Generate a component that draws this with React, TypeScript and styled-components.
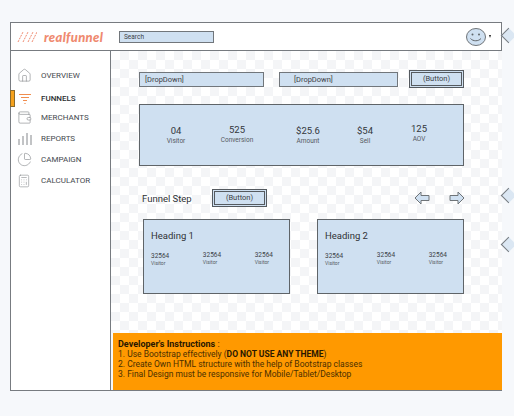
import React, { FC } from "react";
import styled, { createGlobalStyle } from "styled-components";
import { House, Wallet, ChartPie, Calculator } from "lucide-react";

const GlobalStyle = createGlobalStyle`
  html, body {
    margin: 0;
    padding: 0;
    background: #f6f8fb;
    font-family: Roboto, "Liberation Sans", sans-serif;
    color: #2f3236;
  }
`;

const FunnelIcon = () => (
  <svg width="16" height="14" viewBox="0 0 16 14" fill="none" stroke="#f08d4f" strokeWidth="1">
    <path d="M2 2.5h12M4 5.5h8M6 8.5h4M7.4 11.5h1.2" />
  </svg>
);

const BarsIcon = () => (
  <svg width="16" height="14" viewBox="0 0 16 14" fill="none" stroke="#85888c" strokeWidth="1">
    <path d="M2 7v6M6 4v9M10 1v12M14 3v10" />
  </svg>
);

const Smiley = () => (
  <svg width="22" height="20" viewBox="0 0 22 20">
    <ellipse cx="11" cy="10" rx="9.5" ry="8.5" fill="#cfe0f1" stroke="#6f7478" strokeWidth="1" />
    <circle cx="7.5" cy="7.5" r="1" fill="#5f6468" />
    <circle cx="14" cy="7.5" r="1" fill="#5f6468" />
    <path d="M5.5 11.5c2.5 3 8 3 10.5 0" fill="none" stroke="#5f6468" strokeWidth="1" />
  </svg>
);

const Slashes = () => (
  <svg width="20" height="12" viewBox="0 0 20 12" fill="none" stroke="#ef8a70" strokeWidth="1" strokeDasharray="2 1">
    <path d="M1 11L6 1M6 11L11 1M11 11L16 1M15 11L20 1" />
  </svg>
);

const BlockArrow: FC<{ flip?: boolean }> = ({ flip }) => (
  <svg width="16" height="14" viewBox="0 0 16 14">
    <path
      d={flip ? "M1 4.5h8V1l6 6-6 6V9.5H1z" : "M15 4.5H7V1L1 7l6 6V9.5h8z"}
      fill="#cfe0f1"
      stroke="#6f7478"
      strokeWidth="1"
    />
  </svg>
);

const navItems = [
  { label: "OVERVIEW", icon: <House size={15} strokeWidth={1} color="#85888c" />, gap: 0 },
  { label: "FUNNELS", icon: <FunnelIcon />, gap: 2, active: true },
  { label: "MERCHANTS", icon: <Wallet size={15} strokeWidth={1} color="#85888c" />, gap: -2 },
  { label: "REPORTS", icon: <BarsIcon />, gap: 0 },
  { label: "CAMPAIGN", icon: <ChartPie size={15} strokeWidth={1} color="#85888c" />, gap: 0 },
  { label: "CALCULATOR", icon: <Calculator size={14} strokeWidth={1} color="#85888c" />, gap: 0 },
];

const stats = [
  { value: "04", label: "Visitor", width: 72, lift: 0 },
  { value: "525", label: "Conversion", width: 50, lift: 1 },
  { value: "$25.6", label: "Amount", width: 92, lift: 0 },
  { value: "$54", label: "Sell", width: 22, lift: 0 },
  { value: "125", label: "AOV", width: 86, lift: 2 },
];

const funnelCards = [
  { title: "Heading 1", spacing: 148 },
  { title: "Heading 2", spacing: 146 },
];

export default function App() {
  return (
    <>
      <GlobalStyle />
      <Page>
        <Frame>
          <Header>
            <Logo>
              <Slashes />
              <LogoText>realfunnel</LogoText>
            </Logo>
            <Search>Search</Search>
            <UserMenu>
              <Smiley />
              <Caret />
            </UserMenu>
          </Header>
          <Body>
            <Sidebar>
              {navItems.map((item) => (
                <NavItem key={item.label} $gap={item.gap} $active={item.active}>
                  {item.active && <Marker />}
                  <NavIcon>{item.icon}</NavIcon>
                  {item.label}
                </NavItem>
              ))}
            </Sidebar>
            <Content>
              <Main>
                <FilterRow>
                  <DropDown $width={125}>[DropDown]</DropDown>
                  <DropDown $width={119} $indent={14}>[DropDown]</DropDown>
                  <ActionButton $spaced>(Button)</ActionButton>
                </FilterRow>
                <StatsPanel>
                  {stats.map((s) => (
                    <Stat key={s.label} $width={s.width} $lift={s.lift}>
                      <StatValue>{s.value}</StatValue>
                      <StatLabel>{s.label}</StatLabel>
                    </Stat>
                  ))}
                </StatsPanel>
                <StepRow>
                  <StepTitle>Funnel Step</StepTitle>
                  <ActionButton>(Button)</ActionButton>
                  <Arrows>
                    <BlockArrow />
                    <BlockArrow flip />
                  </Arrows>
                </StepRow>
                <Cards>
                  {funnelCards.map((card) => (
                    <Card key={card.title}>
                      <CardTitle>{card.title}</CardTitle>
                      <CardStats>
                        {[0, 1, 2].map((i) => (
                          <CardStat key={i} $low={i === 0}>
                            <b>32564</b>
                            <span>Visitor</span>
                          </CardStat>
                        ))}
                      </CardStats>
                    </Card>
                  ))}
                </Cards>
              </Main>
              <Notes>
                <NotesTitle>
                  Developer's Instructions <span>:</span>
                </NotesTitle>
                <div>
                  1. Use Bootstrap effectively (<strong>DO NOT USE ANY THEME</strong>)
                </div>
                <div>2. Create Own HTML structure with the help of Bootstrap classes</div>
                <div>3. Final Design must be responsive for Mobile/Tablet/Desktop</div>
              </Notes>
            </Content>
          </Body>
        </Frame>
        <Pointer $top={30} />
        <Pointer $top={190} />
        <Pointer $top={239} />
      </Page>
    </>
  );
}

const Page = styled.div`
  position: relative;
  width: 514px;
  height: 416px;
  padding: 22px 0 0 10px;
  box-sizing: border-box;
  overflow: hidden;
`;

const Frame = styled.div`
  width: 492px;
  height: 369px;
  box-sizing: border-box;
  border: 1px solid #777b80;
  border-right: none;
  display: flex;
  flex-direction: column;
`;

const Header = styled.header`
  height: 28px;
  flex: none;
  box-sizing: border-box;
  display: flex;
  align-items: center;
  background: #fff;
  border-bottom: 1px solid #777b80;
  border-right: 1px solid #777b80;
`;

const Logo = styled.div`
  width: 108px;
  padding-left: 6px;
  box-sizing: border-box;
  display: flex;
  align-items: center;
  gap: 7px;
`;

const LogoText = styled.span`
  font-family: Lato, sans-serif;
  font-style: italic;
  font-weight: 900;
  font-size: 13px;
  letter-spacing: 0.3px;
  color: #ef8a70;
`;

const Search = styled.div`
  width: 95px;
  height: 12px;
  box-sizing: border-box;
  border: 1px solid #71767b;
  background: #cfe0f1;
  font-size: 6.5px;
  line-height: 10px;
  padding-left: 4px;
  color: #3c4046;
`;

const UserMenu = styled.div`
  margin-left: auto;
  margin-right: 10px;
  display: flex;
  align-items: center;
  gap: 2px;
`;

const Caret = styled.span`
  width: 0;
  height: 0;
  border-left: 1.5px solid transparent;
  border-right: 1.5px solid transparent;
  border-top: 3px solid #222;
`;

const Body = styled.div`
  flex: 1;
  display: flex;
  min-height: 0;
`;

const Sidebar = styled.nav`
  width: 100px;
  flex: none;
  box-sizing: border-box;
  padding-top: 14px;
  background: #fff;
  border-right: 1px solid #777b80;
`;

const NavItem = styled.div<{ $gap: number; $active?: boolean }>`
  position: relative;
  height: 21px;
  margin-top: ${(p) => p.$gap}px;
  display: flex;
  align-items: center;
  font-size: 8px;
  font-weight: ${(p) => (p.$active ? 500 : 400)};
  color: ${(p) => (p.$active ? "#2a2d31" : "#45494e")};
`;

const Marker = styled.span`
  position: absolute;
  left: -1px;
  top: 2px;
  width: 5px;
  height: 17px;
  box-sizing: border-box;
  background: #f5a11c;
  border: 1px solid #8a6a2c;
`;

const NavIcon = styled.span`
  width: 30px;
  padding-left: 6px;
  box-sizing: border-box;
  display: flex;
  align-items: center;
`;

const Content = styled.div`
  flex: 1;
  min-width: 0;
  display: flex;
  flex-direction: column;
`;

const Main = styled.main`
  flex: 1;
  padding: 19px 0 0 28px;
  background-color: #fff;
  background-image: conic-gradient(#f4f5f7 25%, #fff 0 50%, #f4f5f7 0 75%, #fff 0);
  background-size: 18px 18px;
`;

const FilterRow = styled.div`
  width: 325px;
  display: flex;
  align-items: center;
`;

const DropDown = styled.div<{ $width: number; $indent?: number }>`
  width: ${(p) => p.$width}px;
  margin-left: ${(p) => p.$indent ?? 0}px;
  margin-right: ${(p) => (p.$indent ? 0 : 1)}px;
  height: 15px;
  box-sizing: border-box;
  border: 1px solid #71767b;
  background: #cfe0f1;
  font-size: 7.5px;
  line-height: 13px;
  padding-left: ${(p) => (p.$indent ? 14 : 5)}px;
  color: #3c4046;
`;

const ActionButton = styled.div<{ $spaced?: boolean }>`
  width: 55px;
  height: 18px;
  margin-left: ${(p) => (p.$spaced ? "auto" : "0")};
  box-sizing: border-box;
  border: 3px double #555a5f;
  background: #cfe0f1;
  font-size: 7.5px;
  line-height: 12px;
  text-align: center;
  color: #3c4046;
`;

const StatsPanel = styled.section`
  width: 325px;
  height: 62px;
  margin-top: 16px;
  padding-left: 0;
  box-sizing: border-box;
  border: 1px solid #5f6468;
  background: #cfe0f1;
  display: flex;
  align-items: center;
  gap: 0;
`;

const Stat = styled.div<{ $width: number; $lift: number }>`
  width: ${(p) => p.$width}px;
  text-align: center;
  flex: none;
  transform: translateY(${(p) => -p.$lift}px);
`;

const StatValue = styled.div`
  font-size: 9.5px;
  line-height: 12px;
  color: #33373c;
`;

const StatLabel = styled.div`
  font-size: 6.5px;
  line-height: 9px;
  color: #555a5f;
`;

const StepRow = styled.div`
  width: 326px;
  margin-top: 23px;
  padding-left: 3px;
  box-sizing: border-box;
  display: flex;
  align-items: center;
`;

const StepTitle = styled.div`
  width: 70px;
  font-size: 9.5px;
  color: #2f3236;
`;

const Arrows = styled.div`
  margin-left: auto;
  display: flex;
  gap: 19px;
`;

const Cards = styled.div`
  width: 325px;
  margin-top: 12px;
  padding-left: 4px;
  box-sizing: border-box;
  display: flex;
  justify-content: space-between;
`;

const Card = styled.article`
  width: 147px;
  height: 75px;
  box-sizing: border-box;
  border: 1px solid #5f6468;
  background: #cfe0f1;
  padding: 10px 6px 0 7px;
`;

const CardTitle = styled.div`
  font-size: 9.5px;
  line-height: 12px;
  color: #2f3236;
  margin-bottom: 9px;
`;

const CardStats = styled.div`
  display: flex;
  justify-content: space-between;
  padding-right: 10px;
`;

const CardStat = styled.div<{ $low: boolean }>`
  margin-top: ${(p) => (p.$low ? 1 : 0)}px;
  display: flex;
  flex-direction: column;
  b {
    font-weight: 400;
    font-size: 6.5px;
    line-height: 8px;
    color: #3c4046;
  }
  span {
    font-size: 5px;
    line-height: 6px;
    color: #555a5f;
  }
`;

const Notes = styled.aside`
  height: 57px;
  flex: none;
  box-sizing: border-box;
  margin-left: 2px;
  padding: 6px 5px 0;
  background: #ff9900;
  font-size: 8.5px;
  line-height: 10px;
  color: #4a2f00;
  strong {
    color: #2a1800;
  }
`;

const NotesTitle = styled.div`
  font-weight: 700;
  font-size: 9px;
  color: #2a1800;
  span {
    font-weight: 400;
  }
`;

const Pointer = styled.span<{ $top: number }>`
  position: absolute;
  left: 503px;
  top: ${(p) => p.$top}px;
  width: 11px;
  height: 11px;
  box-sizing: border-box;
  background: #dbe7f3;
  border-left: 1px solid #777b80;
  border-bottom: 1px solid #777b80;
  transform: rotate(45deg);
`;
